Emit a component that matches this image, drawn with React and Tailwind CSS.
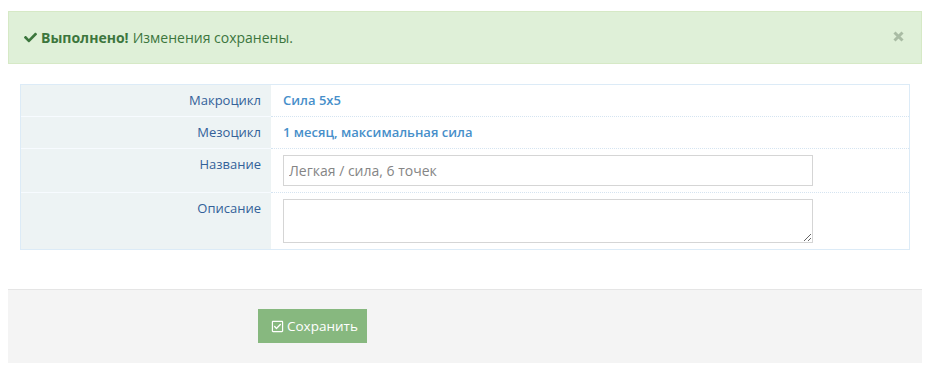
import React from "react";
import { FaCheck, FaRegCheckSquare } from "react-icons/fa";

const font = { fontFamily: '"Open Sans", "Noto Sans", sans-serif' };

function Row({ label, children, first }) {
  return (
    <div className="flex">
      <div
        className={`w-[250px] shrink-0 bg-[#edf3f4] text-right text-[#336199] pt-[6px] pr-[10px] pl-[4px] pb-[6px] leading-[19px] ${first ? "" : "border-t border-[#f7fbff]"}`}
      >
        {label}
      </div>
      <div
        className={`flex-1 pl-[12px] pr-[4px] pt-[6px] pb-[6px] leading-[19px] ${first ? "" : "border-t border-dotted border-[#d5e4f1]"}`}
      >
        {children}
      </div>
    </div>
  );
}

export default function App() {
  return (
    <div className="w-[932px] h-[372px] bg-white text-[13px]" style={font}>
      <div className="pl-[8px] pr-[10px] pt-[11px]">
        <div className="relative flex items-center h-[53px] border border-[#d6e9c6] bg-[#dff0d8] text-[#3c763d] text-[14px] pl-[15px] pr-[15px] leading-[20px]">
          <FaCheck className="w-[13px] h-[13px] mr-[4px] text-[#3c763d]" />
          <span className="font-bold">Выполнено!</span>
          <span className="ml-[4px]">Изменения сохранены.</span>
          <svg
            className="absolute right-[17px] top-[19px]"
            width="11"
            height="11"
            viewBox="0 0 11 11"
          >
            <path d="M1.5 1.5 L9.5 9.5 M9.5 1.5 L1.5 9.5" stroke="#a9bca4" strokeWidth="3" strokeLinecap="butt" />
          </svg>
        </div>

        <div className="mx-[12px] mt-[20px] border border-[#dcebf7]">
          <Row label="Макроцикл" first>
            <span className="font-semibold text-[#478fca]">Сила 5х5</span>
          </Row>
          <Row label="Мезоцикл">
            <span className="font-semibold text-[#478fca]">1 месяц, максимальная сила</span>
          </Row>
          <Row label="Название">
            <input
              readOnly
              defaultValue="Легкая / сила, 6 точек"
              className="block w-[530px] h-[31px] border border-[#d5d5d5] px-[5px] text-[14px] text-[#858585] outline-none"
              style={font}
            />
          </Row>
          <Row label="Описание">
            <textarea
              className="block w-[530px] h-[44px] border border-[#d5d5d5] px-[5px] text-[14px] text-[#858585] outline-none"
              style={font}
            />
          </Row>
        </div>

        <div className="mt-[39px] h-[74px] bg-[#f4f4f4] border-t border-[#e5e5e5] pt-[19px] pl-[250px]">
          <button className="flex items-center h-[34px] w-[109px] bg-[#87b87f] text-white text-[13.5px] pl-[13px]" style={font}>
            <FaRegCheckSquare className="w-[13px] h-[13px] mr-[3px]" />
            <span>Сохранить</span>
          </button>
        </div>
      </div>
    </div>
  );
}
